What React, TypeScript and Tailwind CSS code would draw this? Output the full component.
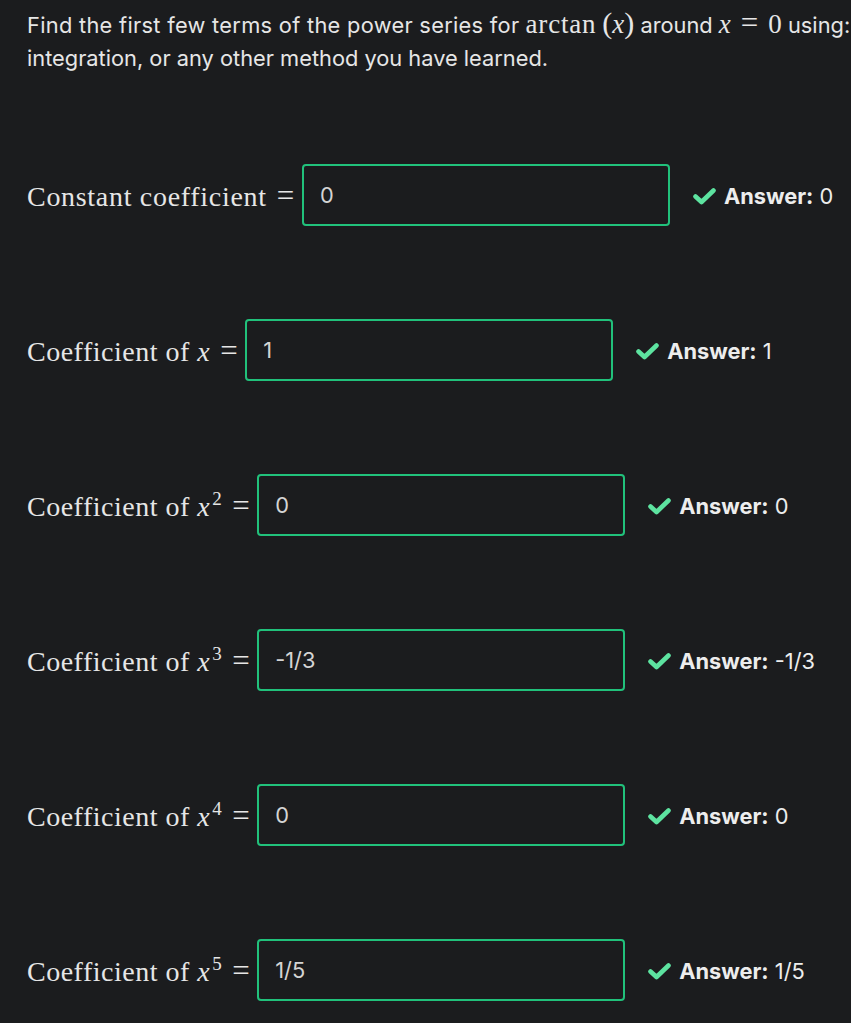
import React from 'react';

const rows = [
  { label: 'Constant coefficient', x: false, exp: '', value: '0', answer: '0' },
  { label: 'Coefficient of ', x: true, exp: '', value: '1', answer: '1' },
  { label: 'Coefficient of ', x: true, exp: '2', value: '0', answer: '0' },
  { label: 'Coefficient of ', x: true, exp: '3', value: '-1/3', answer: '-1/3' },
  { label: 'Coefficient of ', x: true, exp: '4', value: '0', answer: '0' },
  { label: 'Coefficient of ', x: true, exp: '5', value: '1/5', answer: '1/5' },
];

const Check = () => (
  <svg width="25" height="18" viewBox="0 0 25 18" className="shrink-0">
    <path d="M3.5 9.5 L9.5 15 L21.5 3.5" fill="none" stroke="#5de3a0" strokeWidth="4.6" strokeLinejoin="round" strokeLinecap="round" />
  </svg>
);

export default function App() {
  return (
    <div className="min-h-[1023px] w-[851px] overflow-hidden bg-[#1b1c1e] text-[#e6e6e6] font-['Inter','Liberation_Sans',sans-serif]">
      <div className="pl-[27px] pt-[7px]">
        <p className="text-[21.8px] leading-[33px] whitespace-nowrap">
          <span className="tracking-[0.3px]">Find the first few terms of the power series for</span>{' '}
          <span className="font-['Liberation_Serif',serif] text-[27px] leading-none">
            <span className="tracking-[0.8px]">arctan</span>
            <span className="ml-[6px] text-[30px] leading-none">(</span>
            <i>x</i>
            <span className="text-[30px] leading-none">)</span>
          </span>{' '}
          around{' '}
          <span className="font-['Liberation_Serif',serif] text-[27px] leading-none">
            <i>x</i>
            <span className="mx-[10px] text-[31px] leading-none">=</span>0
          </span>{' '}
          using:
          <br />
          integration, or any other method you have learned.
        </p>
        <div className="mt-[89px] flex flex-col gap-[93px]">
          {rows.map((r, i) => (
            <div key={i} className="flex items-center h-[62px]">
              <span
                className={
                  "font-['Liberation_Serif',serif] text-[28px] whitespace-nowrap pt-[2px] " +
                  (r.x ? 'tracking-[0.5px]' : 'tracking-[0.7px]')
                }
              >
                {r.label}
                {r.x && <i>x</i>}
                {r.exp && <span className="text-[19px] relative -top-[11px] ml-[2px]">{r.exp}</span>}
                <span className="ml-[10px] mr-[7px] text-[31px]">=</span>
              </span>
              <div className="w-[368px] h-[62px] border-2 border-[#21c17b] rounded-[4px] flex items-center pl-[16px] text-[21.8px] text-[#d4d4d4]">
                {r.value}
              </div>
              <div className="ml-[22px] flex items-center gap-[7px] text-[21.8px] pt-[2px]">
                <Check />
                <span className="text-[#ededed]">
                  <b className="font-bold">Answer:</b> {r.answer}
                </span>
              </div>
            </div>
          ))}
        </div>
      </div>
    </div>
  );
}
